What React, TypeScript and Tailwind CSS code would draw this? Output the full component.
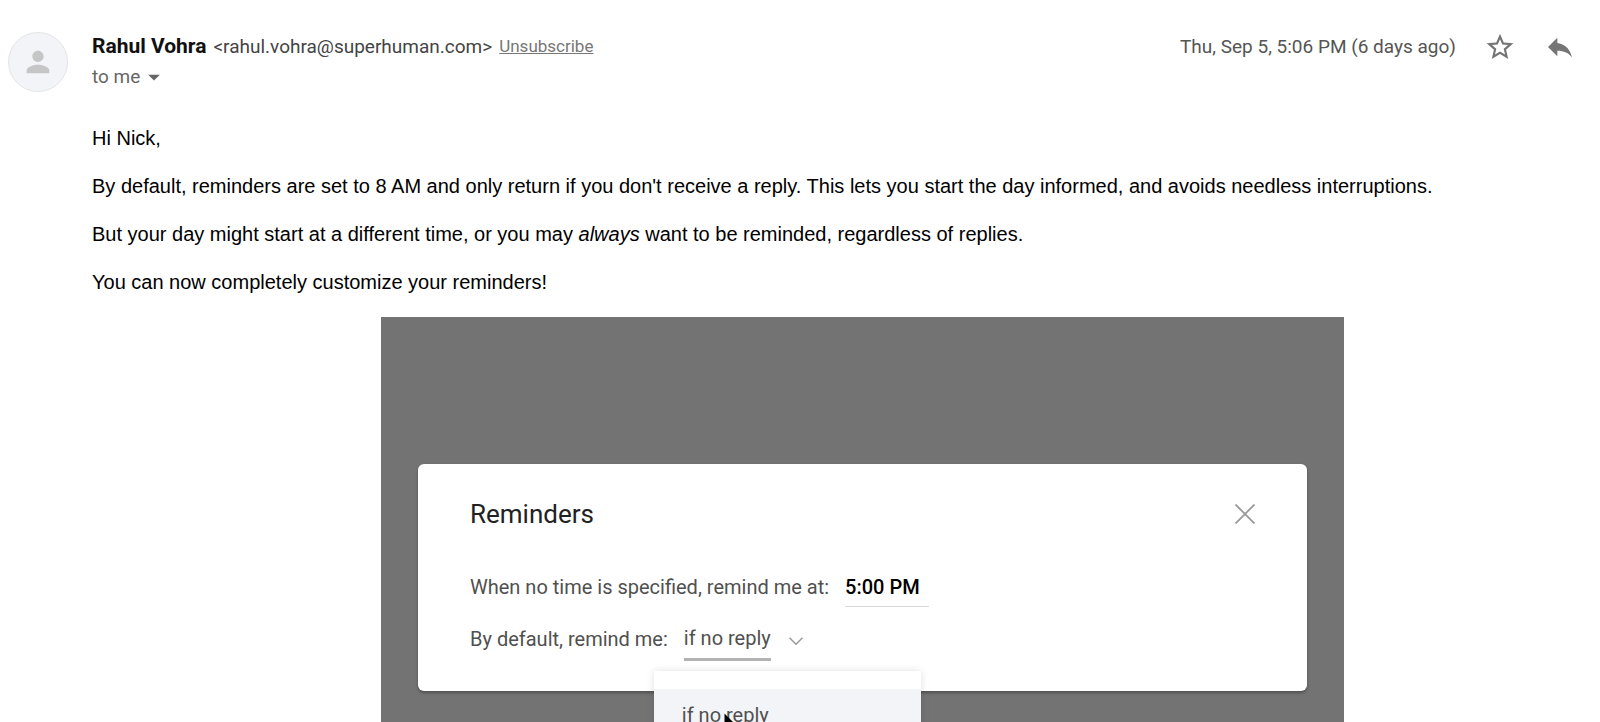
import React, { useState } from "react";
import { MdArrowDropDown, MdPerson, MdReply, MdStarBorder } from "react-icons/md";

const reminderOptions = ["if no reply", "always"];

function MessageHeader() {
  return (
    <header className="flex items-start gap-6 pt-8 pl-2 pr-6 font-[Roboto,sans-serif]">
      <div className="flex h-15 w-15 shrink-0 items-center justify-center rounded-full border border-[#e4e4e6] bg-[#f3f4f8]">
        <MdPerson className="h-[34px] w-[34px] text-[#c6c6c6]" />
      </div>
      <div className="flex-1">
        <div className="flex h-[30px] items-center gap-[7px]">
          <h1 className="text-[21px] font-bold text-[#111]">Rahul Vohra</h1>
          <span className="text-[19px] text-[#444]">&lt;rahul.vohra@superhuman.com&gt;</span>
          <a href="#unsubscribe" className="text-[17px] text-[#777] underline">
            Unsubscribe
          </a>
        </div>
        <button className="flex h-[30px] items-center text-[19px] text-[#666]">
          to me
          <MdArrowDropDown className="h-7 w-7" />
        </button>
      </div>
      <div className="flex h-[30px] items-center gap-7 text-[#757575]">
        <time className="text-[19px] text-[#555]">Thu, Sep 5, 5:06 PM (6 days ago)</time>
        <button aria-label="Star">
          <MdStarBorder className="h-8 w-8" />
        </button>
        <button aria-label="Reply">
          <MdReply className="h-8 w-8" />
        </button>
      </div>
    </header>
  );
}

function RemindersDialog() {
  const [time, setTime] = useState("5:00 PM");
  const [mode, setMode] = useState("if no reply");

  return (
    <section className="rounded-md bg-white px-[52px] pt-8 pb-8 text-[20px] text-[#505050] shadow-[0_2px_3px_rgba(0,0,0,0.3)]">
      <div className="flex h-9 items-center justify-between">
        <h2 className="text-[26px] text-[#222]">Reminders</h2>
        <button aria-label="Close">
          <svg viewBox="0 0 20 20" className="h-5 w-5" fill="none" stroke="#999" strokeWidth="1.8">
            <path d="M.5.5l19 19M19.5.5l-19 19" />
          </svg>
        </button>
      </div>
      <div className="mt-[35px] flex h-10 items-center gap-4">
        <label htmlFor="time">When no time is specified, remind me at:</label>
        <input
          id="time"
          value={time}
          onChange={(e) => setTime(e.target.value)}
          className="h-10 w-[84px] border-b border-[#d8d8d8] font-medium text-black outline-none"
        />
      </div>
      <div className="mt-3 flex h-10 items-center gap-4">
        <label htmlFor="mode">By default, remind me:</label>
        <div className="relative flex items-center gap-[18px]">
          <select
            id="mode"
            value={mode}
            onChange={(e) => setMode(e.target.value)}
            className="h-[43px] w-[87px] appearance-none border-b-3 border-[#b2b2b2] outline-none"
          >
            {reminderOptions.map((option) => (
              <option key={option}>{option}</option>
            ))}
          </select>
          <svg viewBox="0 0 14 8" className="mt-1 h-2 w-[14px]" fill="none" stroke="#999" strokeWidth="1.5">
            <path d="M.5.7L7 7.2 13.5.7" />
          </svg>
          <div className="absolute top-[53px] left-[-30px] w-[267px] bg-white py-[18px] shadow-[0_0_8px_rgba(0,0,0,0.12)]">
            {reminderOptions.map((option) => (
              <button
                key={option}
                onClick={() => setMode(option)}
                className="block h-[53px] w-full px-7 text-left first:bg-[#f3f4f8]"
              >
                {option}
              </button>
            ))}
            {/* mouse pointer */}
            <svg viewBox="0 0 12 19" className="absolute top-[42px] left-[70px] h-[19px] w-3">
              <path d="M.5.5v15l3.6-3.3L6.4 18l2.4-1-2.3-5.500h5z" fill="#000" />
            </svg>
          </div>
        </div>
      </div>
    </section>
  );
}

export default function App() {
  return (
    <main className="h-screen overflow-hidden bg-white">
      <MessageHeader />
      <article className="pt-[34px]">
        <div className="flex flex-col gap-6 pl-[92px] font-['Liberation_Sans',Arial,sans-serif] text-[20px] leading-6 text-black">
          <p>Hi Nick,</p>
          <p>
            By default, reminders are set to 8 AM and only return if you don't receive a reply. This
            lets you start the day informed, and avoids needless interruptions.
          </p>
          <p>
            But your day might start at a different time, or you may <em>always</em> want to be
            reminded, regardless of replies.
          </p>
          <p>You can now completely customize your reminders!</p>
        </div>
        <div className="mt-[23px] flex justify-center pl-[125px] font-[Roboto,sans-serif]">
          <div className="w-full max-w-[963px] bg-[#737373] px-[37px] py-[147px]">
            <RemindersDialog />
          </div>
        </div>
      </article>
    </main>
  );
}
